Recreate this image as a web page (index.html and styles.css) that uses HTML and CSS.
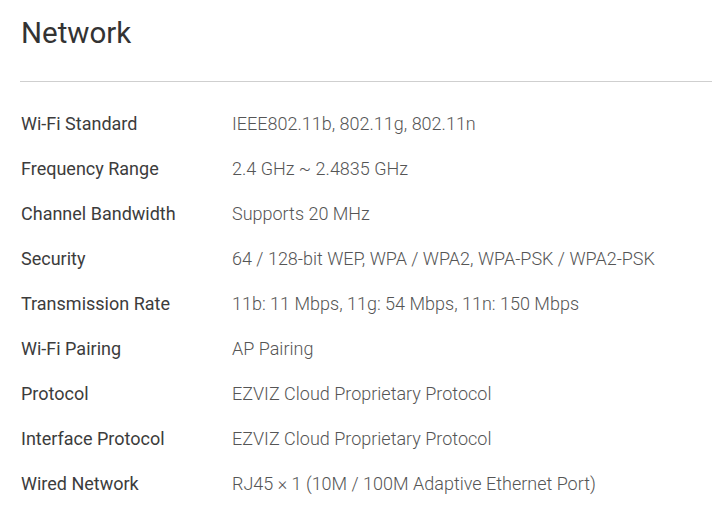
FILE: index.html
```html
<!DOCTYPE html>
<html>
<head>
<meta charset="utf-8">
<link rel="stylesheet" href="styles.css">
</head>
<body>
<section class="spec">
  <h1 class="spec-title">Network</h1>
  <div class="spec-rule"></div>
  <dl class="spec-list">
    <div class="spec-row"><dt>Wi-Fi Standard</dt><dd>IEEE802.11b, 802.11g, 802.11n</dd></div>
    <div class="spec-row"><dt>Frequency Range</dt><dd>2.4 GHz ~ 2.4835 GHz</dd></div>
    <div class="spec-row"><dt>Channel Bandwidth</dt><dd>Supports 20 MHz</dd></div>
    <div class="spec-row"><dt>Security</dt><dd>64 / 128-bit WEP, WPA / WPA2, WPA-PSK / WPA2-PSK</dd></div>
    <div class="spec-row"><dt>Transmission Rate</dt><dd>11b: 11 Mbps, 11g: 54 Mbps, 11n: 150 Mbps</dd></div>
    <div class="spec-row"><dt>Wi-Fi Pairing</dt><dd>AP Pairing</dd></div>
    <div class="spec-row"><dt>Protocol</dt><dd>EZVIZ Cloud Proprietary Protocol</dd></div>
    <div class="spec-row"><dt>Interface Protocol</dt><dd>EZVIZ Cloud Proprietary Protocol</dd></div>
    <div class="spec-row"><dt>Wired Network</dt><dd>RJ45 × 1 (10M / 100M Adaptive Ethernet Port)</dd></div>
  </dl>
</section>
</body>
</html>
```
FILE: styles.css
```css
html, body {
  margin: 0;
  padding: 0;
  background: #ffffff;
}
body {
  font-family: Roboto, "Liberation Sans", sans-serif;
  color: #333333;
}
.spec {
  padding: 16px 0 0 20px;
}
.spec-title {
  margin: 0 0 0 1px;
  font-size: 29.5px;
  font-weight: 400;
  line-height: 34px;
  color: #333333;
}
.spec-rule {
  margin-top: 31px;
  height: 1px;
  background: #cfcfcf;
}
.spec-list {
  margin: 31px 0 0 1px;
  padding: 0;
}
.spec-row {
  display: flex;
  height: 45px;
  align-items: flex-start;
}
.spec-row dt {
  width: 211px;
  flex: none;
  font-size: 18px;
  line-height: 22px;
  font-weight: 400;
  color: #3c3c3c;
}
.spec-row dd {
  margin: 0;
  font-size: 18px;
  line-height: 22px;
  font-weight: 300;
  color: #555555;
}
```
